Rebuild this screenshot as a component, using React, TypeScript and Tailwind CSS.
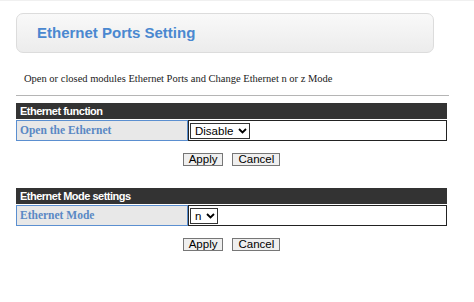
import React from 'react';

type Section = {
  title: string;
  label: string;
  value: string;
  options: string[];
};

const sections: Section[] = [
  { title: 'Ethernet function', label: 'Open the Ethernet', value: 'Disable', options: ['Disable', 'Enable'] },
  { title: 'Ethernet Mode settings', label: 'Ethernet Mode', value: 'n', options: ['n', 'z'] },
];

const Chevron = () => (
  <svg
    className="pointer-events-none absolute right-[3px] top-[5px]"
    width="9"
    height="6"
    viewBox="0 0 9 6"
    fill="none"
  >
    <path d="M1 1l3.5 3.5L8 1" stroke="#000" strokeWidth="1.8" />
  </svg>
);

const SettingBlock: React.FC<{ section: Section }> = ({ section }) => (
  <div className="w-[431px]">
    <div className="h-[16px] bg-[#333333] pl-[4px] text-[11px] leading-[16px] font-bold tracking-[-0.5px] text-white font-['Liberation_Sans',Arial,sans-serif]">
      {section.title}
    </div>
    <div className="mt-[1px] flex h-[21px]">
      <div className="w-[172px] border border-[#5b8fd0] bg-[#e8e8e8] pl-[3px] text-[11.5px] leading-[19px] font-bold text-[#5a88c4] font-['Liberation_Serif',serif]">
        {section.label}
      </div>
      <div className="flex flex-1 items-center border border-[#222222] bg-white pl-[1px]">
        <div className="relative">
          <select
            defaultValue={section.value}
            className="block h-[16px] appearance-none border border-[#333] bg-white pl-[4px] pr-[15px] text-[11.5px] leading-[14px] text-black font-['Liberation_Sans',Arial,sans-serif]"
          >
            {section.options.map((o) => (
              <option key={o} value={o}>
                {o}
              </option>
            ))}
          </select>
          <Chevron />
        </div>
      </div>
    </div>
    <div className="mt-[12px] flex justify-center gap-[9px]">
      <button className="h-[13px] border border-[#767676] bg-[#efefef] px-[5px] text-[11.5px] leading-[11px] text-black font-['Liberation_Sans',Arial,sans-serif]">
        Apply
      </button>
      <button className="h-[13px] border border-[#767676] bg-[#efefef] px-[5px] text-[11.5px] leading-[11px] text-black font-['Liberation_Sans',Arial,sans-serif]">
        Cancel
      </button>
    </div>
  </div>
);

const App: React.FC = () => {
  return (
    <div className="h-[302px] w-[474px] bg-white">
      <div className="h-[1px] bg-[#f0f0f0]" />
      <div className="pl-[16px] pt-[12px]">
        <div className="flex h-[40px] w-[418px] items-center rounded-[7px] border border-[#dcdcdc] bg-gradient-to-b from-[#f9f9f9] to-[#ececec] pl-[20px]">
          <h1 className="text-[15px] font-bold text-[#4a88d0] font-['Liberation_Sans',Arial,sans-serif]">
            Ethernet Ports Setting
          </h1>
        </div>
        <p className="mt-[19px] pl-[8px] text-[10.5px] leading-[13px] text-[#222] font-['Liberation_Serif',serif]">
          Open or closed modules Ethernet Ports and Change Ethernet n or z Mode
        </p>
        <div className="mt-[10px] h-[1px] w-[433px] bg-[#b5b5b5]" />
        <div className="mt-[7px] flex flex-col gap-[22px]">
          {sections.map((s) => (
            <SettingBlock key={s.title} section={s} />
          ))}
        </div>
      </div>
    </div>
  );
};

export default App;
